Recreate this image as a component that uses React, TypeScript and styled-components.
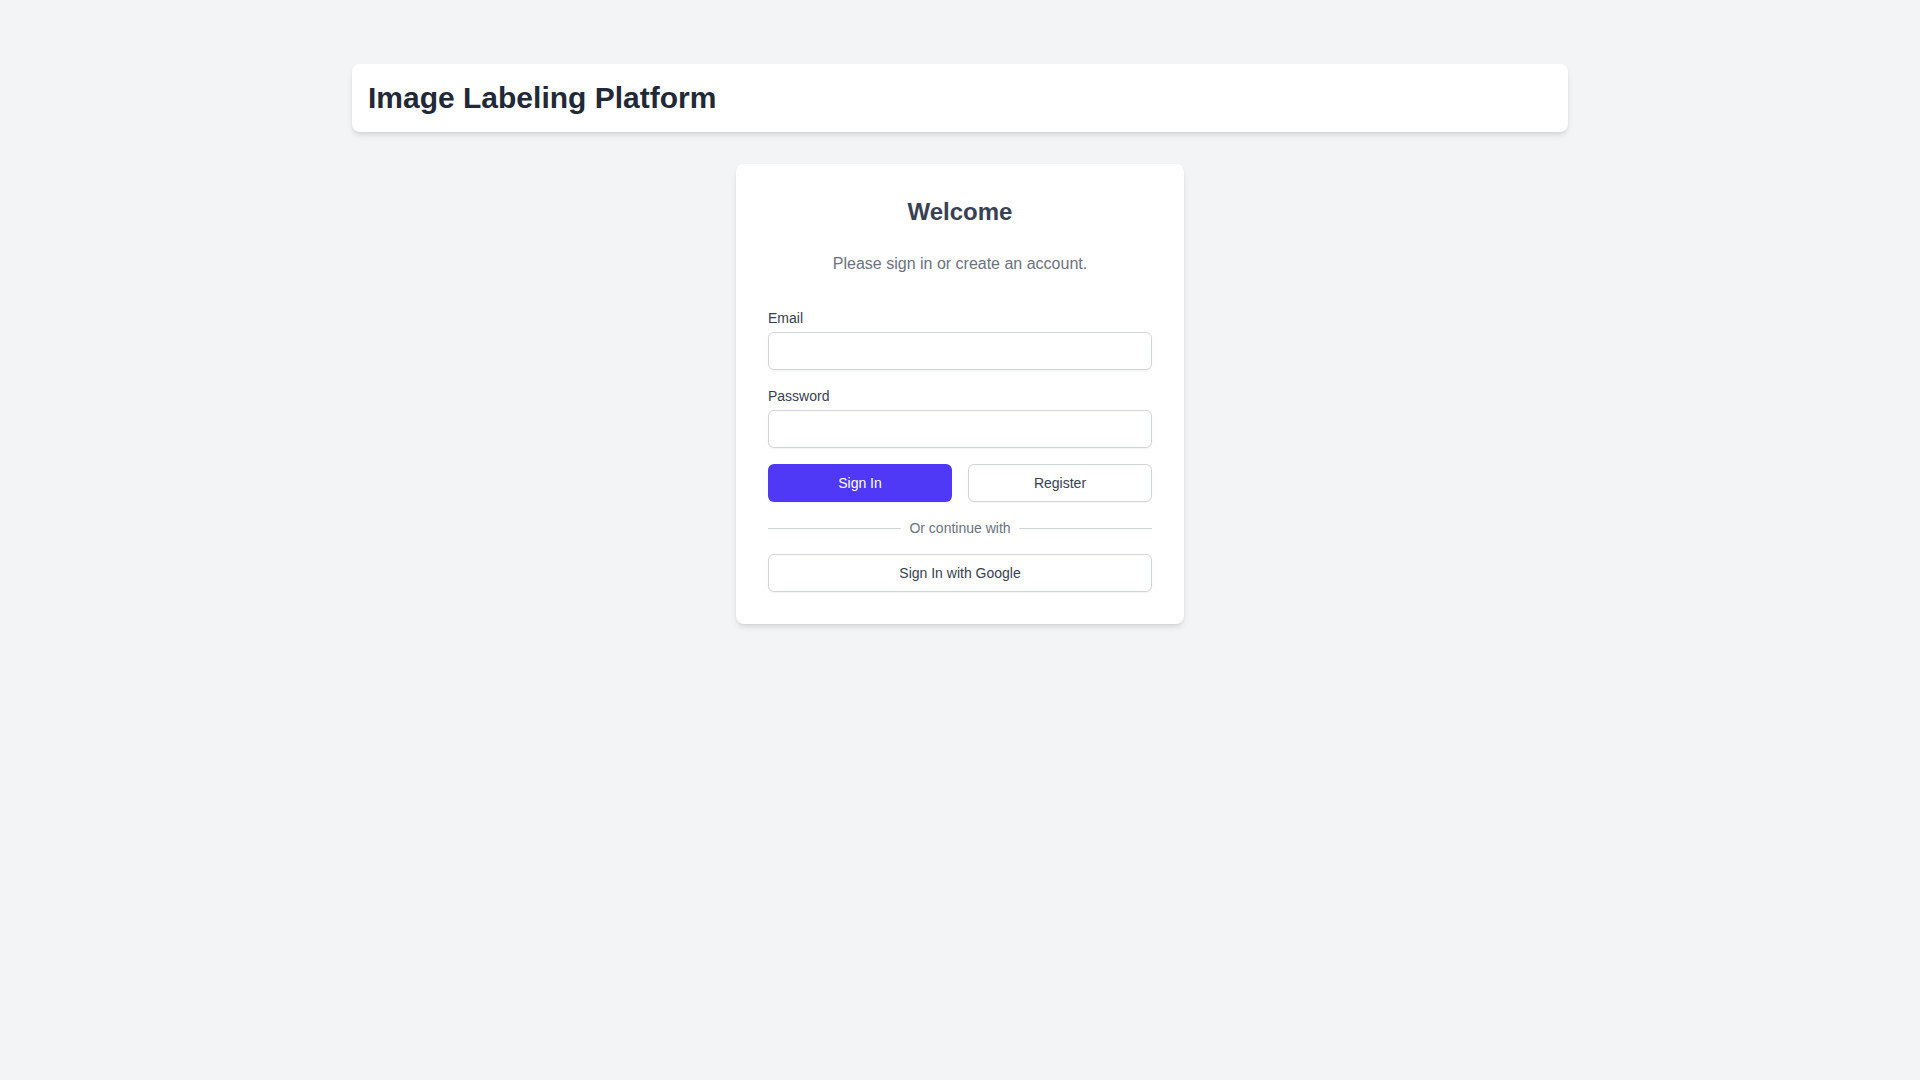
import React from 'react';
import styled, {createGlobalStyle} from "styled-components";

const GlobalStyle = createGlobalStyle`
  * {
    box-sizing: border-box;
  }

  body {
    margin: 0;
    background: #f3f4f6;
    font-family: "Liberation Sans", Arial, sans-serif;
    color: #1f2937;
  }
`

function App() {
    return (
        <>
            <GlobalStyle/>
            <Page>
                <Header>
                    <Title>Image Labeling Platform</Title>
                </Header>
                <Card>
                    <Heading>Welcome</Heading>
                    <Subtitle>Please sign in or create an account.</Subtitle>
                    <Form onSubmit={e => e.preventDefault()}>
                        <Field>
                            <Label htmlFor="email">Email</Label>
                            <Input id="email" type="email"/>
                        </Field>
                        <Field>
                            <Label htmlFor="password">Password</Label>
                            <Input id="password" type="password"/>
                        </Field>
                        <ButtonRow>
                            <Button type="submit" primary>Sign In</Button>
                            <Button type="button">Register</Button>
                        </ButtonRow>
                        <Divider>
                            <DividerText>Or continue with</DividerText>
                        </Divider>
                        <Button type="button">Sign In with Google</Button>
                    </Form>
                </Card>
            </Page>
        </>
    );
}

const Page = styled.div`
  max-width: 1280px;
  margin: 0 auto;
  padding: 64px 32px;
`

const Header = styled.header`
  padding: 16px;
  margin-bottom: 32px;

  border-radius: 8px;
  background: #ffffff;
  box-shadow: 0 4px 6px -1px rgba(0, 0, 0, 0.1), 0 2px 4px -2px rgba(0, 0, 0, 0.1);
`

const Title = styled.h1`
  margin: 0;

  font-size: 30px;
  line-height: 36px;
  font-weight: 700;
  color: #1f2937;
`

const Card = styled.div`
  width: 448px;
  margin: 0 auto;
  padding: 32px;

  border-radius: 8px;
  background: #ffffff;
  box-shadow: 0 4px 6px -1px rgba(0, 0, 0, 0.1), 0 2px 4px -2px rgba(0, 0, 0, 0.1);
`

const Heading = styled.h2`
  margin: 0 0 24px;

  text-align: center;
  font-size: 24px;
  line-height: 32px;
  font-weight: 700;
  color: #374151;
`

const Subtitle = styled.p`
  margin: 0 0 32px;

  text-align: center;
  font-size: 16px;
  line-height: 24px;
  color: #6b7280;
`

const Form = styled.form`
  display: flex;
  flex-direction: column;
  gap: 16px;
`

const Field = styled.div`
  display: flex;
  flex-direction: column;
  gap: 4px;
`

const Label = styled.label`
  font-size: 14px;
  line-height: 20px;
  font-weight: 500;
  color: #374151;
`

const Input = styled.input`
  height: 38px;
  padding: 8px 12px;

  border: 1px solid #d1d5db;
  border-radius: 6px;
  background: #ffffff;
  box-shadow: 0 1px 2px 0 rgba(0, 0, 0, 0.05);
  font: inherit;
  font-size: 14px;
  outline: none;
`

const ButtonRow = styled.div`
  display: grid;
  grid-template-columns: 1fr 1fr;
  gap: 16px;
`

const Button = styled.button<{primary?: boolean}>`
  height: 38px;
  padding: 8px 16px;

  border: 1px solid ${p => p.primary ? 'transparent' : '#d1d5db'};
  border-radius: 6px;
  background: ${p => p.primary ? '#4f39f6' : '#ffffff'};
  box-shadow: 0 1px 2px 0 rgba(0, 0, 0, 0.05);
  color: ${p => p.primary ? '#ffffff' : '#374151'};
  font-family: inherit;
  font-size: 14px;
  line-height: 20px;
  font-weight: 500;
  cursor: pointer;
`

const Divider = styled.div`
  display: flex;
  align-items: center;
  gap: 8px;

  &::before, &::after {
    content: "";
    flex: 1;
    border-top: 1px solid #d1d5db;
  }
`

const DividerText = styled.span`
  font-size: 14px;
  line-height: 20px;
  color: #6b7280;
`

export default App;
